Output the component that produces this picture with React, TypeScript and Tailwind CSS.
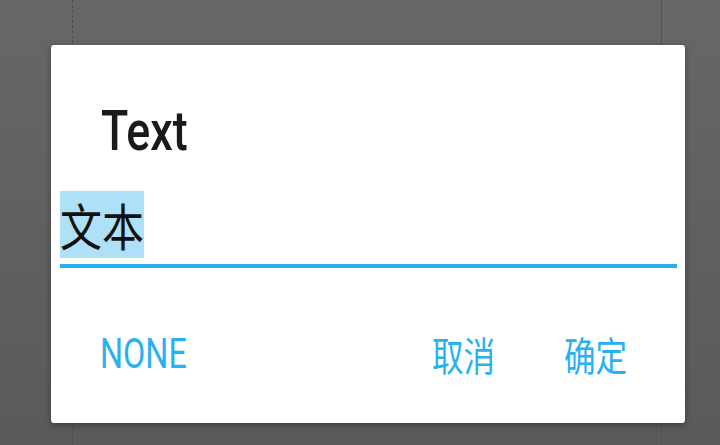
import React from "react";

const roboto = { fontFamily: "Roboto, 'Noto Sans', sans-serif" };

const App = () => {
  return (
    <div
      className="relative w-[720px] h-[445px] overflow-hidden bg-gradient-to-b from-[#676767] to-[#5a5a5a]"
      style={roboto}
    >
      {/* Page behind the dialog */}
      <div className="ml-[72px] w-[590px] h-full border-l border-dashed border-l-[#4f4f4f]">
        <div className="ml-auto w-px h-full bg-[#535353]" />
      </div>

      {/* Dialog */}
      <div className="absolute left-[51px] top-[45px] w-[634px] h-[378px] bg-white rounded-[3px] shadow-[0_2px_6px_rgba(0,0,0,0.35)] flex flex-col pt-[58px]">
        {/* Title */}
        <div className="pl-[50px] h-[56px] text-[56px] leading-[56px] text-[#1a1a1a] font-medium font-['Roboto',sans-serif]">
          <span className="inline-block origin-left scale-x-[0.8]">Text</span>
        </div>

        {/* Edit field */}
        <div className="mt-[32px] pl-[9px] h-[67px]">
          <span className="inline-block origin-left scale-x-[0.84] h-[67px] leading-[67px] text-[50px] bg-[#aee0f8] text-[#111] font-['Noto_Sans_CJK_SC',sans-serif]">
            文本
          </span>
        </div>
        <div className="mt-[6px] ml-[9px] mr-[8px] h-[4px] bg-[#29b0ef]" />

        {/* Buttons */}
        <div className="mt-[65px] flex items-center h-[42px] pl-[49px] text-[#29b0ef]">
          <span className="inline-block origin-left scale-x-[0.77] text-[42px] leading-[42px] font-['Roboto',sans-serif]">
            NONE
          </span>
          <span className="ml-auto inline-block origin-left scale-x-[0.79] text-[40px] leading-[42px] font-['Noto_Sans_CJK_SC',sans-serif]">
            取消
          </span>
          <span className="ml-[52px] mr-[41px] inline-block origin-left scale-x-[0.79] text-[40px] leading-[42px] font-['Noto_Sans_CJK_SC',sans-serif]">
            确定
          </span>
        </div>
      </div>
    </div>
  );
};

export default App;
